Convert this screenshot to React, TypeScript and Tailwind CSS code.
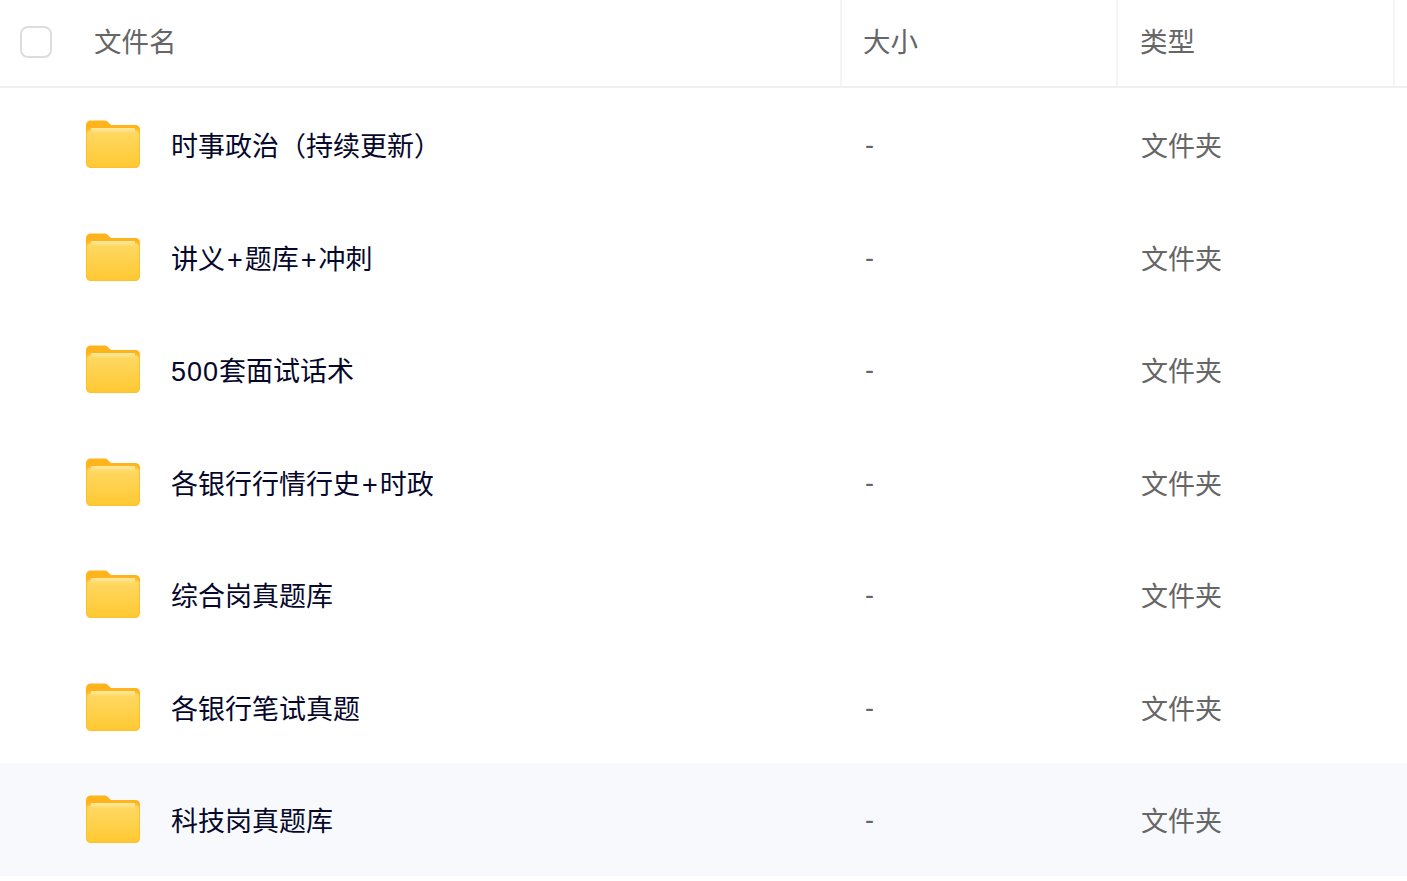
import React from 'react';

const rows = [
  '时事政治（持续更新）',
  '讲义+题库+冲刺',
  '500套面试话术',
  '各银行行情行史+时政',
  '综合岗真题库',
  '各银行笔试真题',
  '科技岗真题库',
];

// 加号和数字比回退字体略宽，这里单独补一点间距
const FileName: React.FC<{ name: string }> = ({ name }) => (
  <>
    {name.split(/(\+|\d+)/).map((part, i) => {
      if (part === '+') {
        return (
          <span key={i} className="mx-[2px]">
            +
          </span>
        );
      }
      if (/^\d+$/.test(part)) {
        return (
          <span key={i} className="tracking-[1px]">
            {part}
          </span>
        );
      }
      return <span key={i}>{part}</span>;
    })}
  </>
);

const FolderIcon: React.FC = () => (
  <svg width="56" height="50" viewBox="0 0 56 50" className="shrink-0">
    <defs>
      <linearGradient id="folderFront" x1="0" y1="0" x2="0" y2="1">
        <stop offset="0" stopColor="#ffd964" />
        <stop offset="1" stopColor="#ffc933" />
      </linearGradient>
      <linearGradient id="folderRim" x1="0" y1="0" x2="0" y2="1">
        <stop offset="0" stopColor="#ffe9a6" />
        <stop offset="1" stopColor="#ffd964" />
      </linearGradient>
    </defs>
    <path d="M1 6.500C1 3.500 3 1.500 6 1.500h13c2 0 3 .6 4.200 1.800L26 6h24c3 0 5 2 5 4.500V20H1z" fill="#ffb41c" />
    <path d="M1 14c0-2.800 2-4.800 5-4.800h44c3 0 5 2 5 4.800v30c0 3-2 5-5 5H6c-3 0-5-2-5-5z" fill="#ffc02c" />
    <path d="M2 43.500V15c0-2 1.500-3.500 3.500-3.500h45c2 0 3.500 1.500 3.500 3.500v28.500c0 2.500-1.800 4.300-4.300 4.300H6.300C3.800 47.800 2 46 2 43.500z" fill="url(#folderFront)" />
    <rect x="6" y="9" width="44" height="5" rx="1" fill="url(#folderRim)" />
  </svg>
);

const App: React.FC = () => {
  return (
    <div className="w-[1407px] h-[881px] overflow-hidden bg-white font-['Liberation_Sans','Noto_Sans_CJK_SC',sans-serif] text-[27px]">
      {/* 表头 */}
      <div className="flex h-[88px] border-b-2 border-[#f0f0f0] text-[27.5px] text-[#666666]">
        <div className="flex w-[842px] items-center border-r-2 border-[#f5f5f5] pl-5">
          <div className="mb-[3px] h-8 w-8 rounded-lg border-2 border-[#dddddd]" />
          <span className="ml-[42px]">文件名</span>
        </div>
        <div className="flex w-[276px] items-center border-r-2 border-[#f5f5f5] pl-[21px]">大小</div>
        <div className="flex w-[277px] items-center border-r-2 border-[#f5f5f5] pl-[22px]">类型</div>
      </div>

      {rows.map((name, i) => (
        <div
          key={name}
          className={`flex h-[112.5px] items-center ${i === 6 ? 'bg-[#f7f9fc]' : ''}`}
        >
          <div className="flex w-[842px] items-center pl-[85px]">
            <FolderIcon />
            <span className="ml-[30px] pt-[6px] text-[#06082b]">
              <FileName name={name} />
            </span>
          </div>
          <div className="w-[276px] pl-[23px] pt-[2px] text-[#666666]">-</div>
          <div className="pl-[23px] pt-[6px] text-[#666666]">文件夹</div>
        </div>
      ))}
    </div>
  );
};

export default App;
